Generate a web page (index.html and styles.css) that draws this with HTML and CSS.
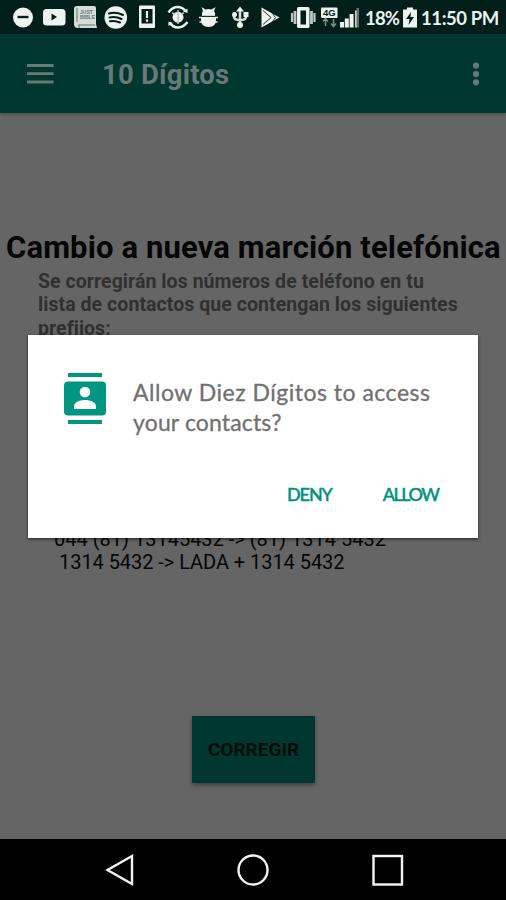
FILE: index.html
```html
<!DOCTYPE html>
<html lang="es">
<head>
    <meta charset="utf-8">
    <title>10 Dígitos</title>
    <link rel="stylesheet" href="styles.css">
</head>
<body>
    <div class="phone">
        <div class="status-bar">
            <svg class="status-icons" width="355" height="34" viewBox="0 0 355 34" fill="#eef3f2">
                <!-- do not disturb -->
                <circle cx="23" cy="17.5" r="10"/>
                <path d="M17.5 17h11" stroke="#001f1a" stroke-width="2.4"/>
                <!-- video -->
                <rect x="43" y="9" width="22.500" height="16.500" rx="3.500"/>
                <path d="M51.500 13.500v7l5.500-3.500z" fill="#001f1a"/>
                <!-- book -->
                <path d="M77 6h17q2 0 2 2v16l1 4H78q-4 0-4-4V9q0-3 3-3z" fill="#d5dcda"/>
                <path d="M77 8v14M78 25h17M79 25v3" stroke="#68736f" fill="none"/>
                <text x="80" y="13.500" class="book-text">JUST</text>
                <text x="80" y="18.500" class="book-text">BIBLE</text>
                <!-- music -->
                <circle cx="115.800" cy="17.500" r="11.300"/>
                <path d="M109 13.500q7-2 14 1.500M109.500 17.500q6-1.500 12 1.500M110 21.300q5-1.200 10 1.200" fill="none" stroke="#001f1a" stroke-width="2" stroke-linecap="round"/>
                <!-- phone alert -->
                <rect x="139" y="5.500" width="16" height="22.500" rx="1"/>
                <rect x="141.500" y="9" width="11" height="14.500" fill="#001f1a"/>
                <path d="M147 11v7M147 19.500v2.300" stroke="#eef3f2" stroke-width="2.200"/>
                <!-- sync -->
                <circle cx="178" cy="17.200" r="5.500"/>
                <path d="M172 13l3 1M184 13l-3 1M178 10v14" stroke="#bcc8c5" stroke-width="1.500"/>
                <path d="M168.500 12.500q4-5.500 9-5.500 5 0 8.500 4.500M187.500 22q-4 5.500-9.500 5.500-5 0-8.500-5" fill="none" stroke="#eef3f2" stroke-width="2.400"/>
                <path d="M183 11.500l4.500 1.500V8.500zM173 23l-4.500-1.500v4.500z"/>
                <!-- android debug -->
                <path d="M202 16q-1-3 1-5l-1.500-4 4 2.500q3-1 6 0l4-2.500-1.500 4q2 2 1 5z"/>
                <path d="M201 17h15v3q0 7-7.500 7t-7.500-7z"/>
                <path d="M199 17.500h19M199.500 22h18" stroke="#eef3f2" stroke-width="1.600"/>
                <path d="M202 16.300h13" stroke="#001f1a" stroke-width=".8"/>
                <!-- usb -->
                <path d="M240 10v14M234 14v3q0 3 6 3M246 14v3q0 3-6 3" fill="none" stroke="#d5dcda" stroke-width="2.500"/>
                <path d="M240 6.500l4 5h-8z"/>
                <circle cx="234.500" cy="14.500" r="2.500"/>
                <rect x="243.500" y="12" width="5" height="5"/>
                <circle cx="240" cy="25" r="3"/>
                <!-- play store -->
                <path d="M261.500 7.500l18 10-18 10z"/>
                <path d="M263 10.500l8 7-8 7M272.500 13.500l3 4-3 4" fill="none" stroke="#001f1a" stroke-width=".9"/>
                <!-- vibrate -->
                <rect x="297" y="7" width="12.500" height="21" rx="1.500"/>
                <rect x="300.500" y="10.500" width="5.500" height="14" fill="#001f1a"/>
                <path d="M295 11v13M311.500 11v13" stroke="#bcc8c5" stroke-width="2.800"/>
                <path d="M292 13v9M314.500 13v9" stroke="#bcc8c5" stroke-width="2.200"/>
                <!-- 4G -->
                <rect x="321" y="7.500" width="16.500" height="10.500" rx="1"/>
                <text x="323" y="16.200" class="net-text">4G</text>
                <path d="M325.500 26v-7M323 21.500l2.500-3 2.500 3M333.500 19v7M331 23.500l2.500 3 2.500-3" fill="none" stroke="#7c8d89" stroke-width="1.500"/>
                <!-- signal -->
                <path d="M340 22h4v5.500h-4zM344.800 18.500h4v9h-4zM349.600 14h4v13.500h-4z"/>
            </svg>
            <svg class="signal-end" width="8" height="34" viewBox="0 0 8 34">
                <path d="M-.5 10.500H2v17H-.5z" fill="#cfd8d6"/>
                <path d="M1.500 8H4v19.500H1.500z" fill="#60736f"/>
            </svg>
            <span class="battery-level">18%</span>
            <svg class="battery" width="14" height="34" viewBox="0 0 14 34">
                <path d="M4 7.500h6v2h4V27.500H0v-18h4z" fill="#eef3f2"/>
                <path d="M8 12l-5 7h3.500l-1 6 5.500-8H7.500z" fill="#001f1a"/>
            </svg>
            <span class="clock">11:50 PM</span>
        </div>

        <div class="toolbar">
            <svg class="menu-icon" width="27" height="20" viewBox="0 0 27 20">
                <path d="M0 1.500h26.500M0 9.700h26.500M0 18h26.500" stroke="#687a77" stroke-width="2.800"/>
            </svg>
            <div class="app-title">10 Dígitos</div>
            <svg class="more-icon" width="8" height="24" viewBox="0 0 8 24" fill="#687a77">
                <circle cx="4" cy="3.500" r="3.100"/>
                <circle cx="4" cy="12" r="3.100"/>
                <circle cx="4" cy="20.300" r="3.100"/>
            </svg>
        </div>

        <div class="content">
            <h1>Cambio a nueva marción telefónica</h1>
            <p class="intro">Se corregirán los números de teléfono en tu<br>lista de contactos que contengan los siguientes<br>prefijos:</p>
            <div class="examples">
                <div class="example">044 (81) 13145432 -&gt; (81) 1314 5432</div>
                <div class="example local">1314 5432 -&gt; LADA + 1314 5432</div>
            </div>
            <button class="fix-button">CORREGIR</button>
        </div>

        <div class="nav-bar">
            <svg width="30" height="34" viewBox="0 0 30 34"><path d="M27 3v28L2.500 17z"/></svg>
            <svg width="34" height="34" viewBox="0 0 34 34"><circle cx="17" cy="17" r="14.500"/></svg>
            <svg width="34" height="34" viewBox="0 0 34 34"><rect x="2.500" y="3" width="28.500" height="28.500"/></svg>
        </div>

        <div class="dialog">
            <div class="dialog-body">
                <svg class="contacts-icon" width="42" height="52" viewBox="0 0 42 52" fill="#009681">
                    <rect x="4" y="0" width="34" height="4"/>
                    <rect x="0" y="8.500" width="42" height="34" rx="4"/>
                    <rect x="4" y="47" width="34" height="4"/>
                    <circle cx="21" cy="19" r="5.300" fill="#fff"/>
                    <path d="M10 36v-2.500c0-4.500 6-6.500 11-6.500s11 2 11 6.500V36z" fill="#fff"/>
                </svg>
                <div class="message">
                    <div class="message-first">Allow Diez Dígitos to access</div>
                    <div class="message-second">your contacts?</div>
                </div>
            </div>
            <div class="dialog-actions">
                <button class="deny">DENY</button>
                <button class="allow">ALLOW</button>
            </div>
        </div>
    </div>
</body>
</html>
```
FILE: styles.css
```css
body {
    margin: 0;
    font-family: Roboto, sans-serif;
    background-color: #656565;
}
.phone {
    position: relative;
    width: 506px;
    height: 900px;
    overflow: hidden;
    display: flex;
    flex-direction: column;
}
button {
    border: none;
    padding: 0;
    background: none;
    cursor: pointer;
}

/* status bar */
.status-bar {
    height: 34px;
    display: flex;
    align-items: center;
    background-color: #001f1a;
    color: #eef3f2;
    font-family: Lato, sans-serif;
    font-weight: bold;
    font-size: 18.500px;
    white-space: nowrap;
}
.status-bar svg {
    flex: none;
}
.status-icons {
    width: 355px;
}
.book-text {
    font: bold 5px "Liberation Sans", sans-serif;
    fill: #68736f;
}
.net-text {
    font: bold 9.500px "Liberation Sans", sans-serif;
    fill: #001f1a;
}
.battery-level {
    width: 40px;
    margin-left: 2px;
    padding-top: 2px;
    letter-spacing: -0.8px;
}
.battery {
    margin-left: -2px;
}
.clock {
    margin-left: 4px;
    padding-top: 2px;
    letter-spacing: -0.4px;
}

/* app bar */
.toolbar {
    height: 79px;
    display: flex;
    align-items: center;
    background-color: #00372f;
    box-shadow: 0 1px 3px rgba(0, 0, 0, 0.3);
}
.menu-icon {
    margin-left: 27px;
}
.app-title {
    margin-left: 48px;
    padding-top: 2px;
    color: #687a77;
    font-size: 27.500px;
    font-weight: bold;
    letter-spacing: 0.2px;
    white-space: nowrap;
}
.more-icon {
    margin-left: auto;
    margin-right: 26px;
}

/* page content */
.content {
    flex: 1;
    display: flex;
    flex-direction: column;
}
h1 {
    margin: 116px 0 0 6px;
    font-size: 31px;
    line-height: 38px;
    font-weight: bold;
    letter-spacing: 0.13px;
    color: #050505;
    white-space: nowrap;
}
.intro {
    margin: 3px 0 0 38px;
    font-size: 19.500px;
    line-height: 23.300px;
    font-weight: bold;
    letter-spacing: 0.06px;
    color: #303030;
    white-space: nowrap;
}
.examples {
    margin-top: 188px;
    padding-left: 54px;
    font-size: 20px;
    line-height: 23.500px;
    color: #050505;
    white-space: nowrap;
}
.local {
    padding-left: 5px;
    letter-spacing: -0.05px;
}
.fix-button {
    width: 123px;
    height: 67px;
    margin: 141px 0 0 192px;
    background-color: #00372f;
    color: #020d0b;
    font-family: Roboto, sans-serif;
    font-size: 19px;
    font-weight: bold;
    box-shadow: 0 2px 4px rgba(0, 0, 0, 0.4);
}

/* navigation bar */
.nav-bar {
    height: 61px;
    display: flex;
    align-items: center;
    padding-left: 105px;
    gap: 101px;
    background-color: #000;
}
.nav-bar svg {
    fill: none;
    stroke: #f4f4f4;
    stroke-width: 2.4;
}

/* permission dialog */
.dialog {
    position: absolute;
    left: 28px;
    top: 335px;
    width: 450px;
    height: 203px;
    background-color: #fff;
    box-shadow: 0 1px 3px rgba(0, 0, 0, 0.7);
    font-family: Lato, sans-serif;
}
.dialog-body {
    display: flex;
    height: 138px;
    padding-left: 36px;
}
.contacts-icon {
    margin-top: 38px;
}
.message {
    margin: 42px 0 0 27px;
    color: #707070;
    font-size: 23px;
    line-height: 30px;
    white-space: nowrap;
    -webkit-text-stroke: 0.3px #707070;
}
.message-first {
    letter-spacing: 0.5px;
}
.message-second {
    letter-spacing: 0.15px;
}
.dialog-actions {
    display: flex;
    padding-left: 259px;
    gap: 51px;
}
.dialog-actions button {
    height: 42px;
    color: #00917c;
    font-family: Lato, sans-serif;
    font-size: 18px;
    font-weight: 500;
    letter-spacing: -1.1px;
    -webkit-text-stroke: 0.4px #00917c;
}
.dialog-actions .allow {
    letter-spacing: -1.5px;
}
```
